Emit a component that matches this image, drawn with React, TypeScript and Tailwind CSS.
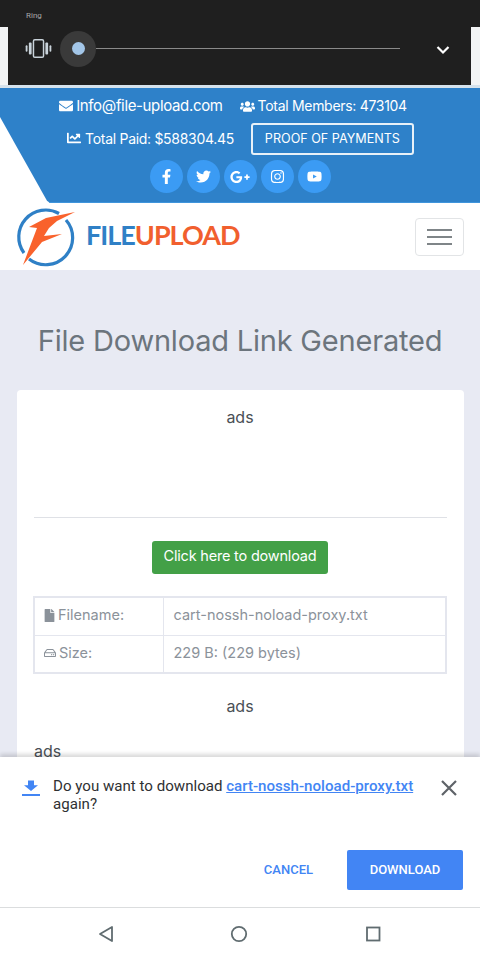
import React from "react";
import { FaEnvelope, FaUsers, FaChartLine, FaFacebookF, FaTwitter, FaGooglePlusG, FaInstagram, FaYoutube, FaFile, FaRegHdd } from "react-icons/fa";

const socials = [FaFacebookF, FaTwitter, FaGooglePlusG, FaInstagram, FaYoutube];

function Logo() {
  return (
    <svg width="60" height="60" viewBox="0 0 60 60" fill="none">
      <path d="M9 46 A27 27 0 0 1 44 6.5" stroke="#2f80c6" strokeWidth="3.2" fill="none" />
      <path d="M51 13 A27 27 0 0 1 14 52" stroke="#2f80c6" strokeWidth="3.2" fill="none" />
      <path d="M60 5 L31 11 L14 20 L22 21 L8 58 L27 35 L47 27 L29 29 L34 21 L42 14 Z" fill="#f9622c" />
    </svg>
  );
}

export default function App() {
  return (
    <div className="w-[480px] h-[960px] overflow-hidden flex flex-col bg-white font-['Inter',sans-serif]">
      {/* Android ring volume panel */}
      <div className="h-[88px] shrink-0 flex flex-col bg-[#f2f4f5]">
        <div className="h-[27px] bg-[#1f1f1f] pl-[26px] pt-[11px] text-[8px] leading-[10px] text-[#a8a8a8] font-['Roboto',sans-serif]">Ring</div>
        <div className="mx-2 w-[463px] h-[58px] bg-[#1f1f1f] flex items-center">
          <svg className="ml-[17px] mb-[15px]" width="27" height="22" viewBox="0 0 29 24" fill="none">
            <rect x="9" y="2" width="11" height="19" rx="1.5" stroke="#c9d3da" strokeWidth="1.6" />
            <rect x="4" y="5" width="3" height="13" rx="1" fill="#c9d3da" />
            <rect x="22" y="5" width="3" height="13" rx="1" fill="#c9d3da" />
            <rect x="0.5" y="8" width="2" height="7" rx="1" fill="#c9d3da" />
            <rect x="26.5" y="8" width="2" height="7" rx="1" fill="#c9d3da" />
          </svg>
          <div className="ml-[8px] w-[36px] h-[36px] rounded-full bg-[#3a3a3a] flex items-center justify-center mb-[15px]">
            <div className="w-[13px] h-[13px] rounded-full bg-[#a3c6e8]"></div>
          </div>
          <div className="w-[304px] h-px bg-[#8a8a8a] mb-[15px]"></div>
          <svg className="ml-[36px] mb-[13px]" width="14" height="10" viewBox="0 0 14 10" fill="none">
            <path d="M1.5 2 L7 7.5 L12.5 2" stroke="#ffffff" strokeWidth="2.2" />
          </svg>
        </div>
        <div className="flex-1 bg-[#d5e2ec]"></div>
      </div>

      {/* Blue top bar */}
      <div className="h-[115px] shrink-0 bg-[#2e81c9] border-b border-[#3f95dc] [clip-path:polygon(0_0,100%_0,100%_100%,50px_100%,47px_98%,0_29px)] text-white flex flex-col items-center pt-[7px]">
        <div className="h-[22px] flex items-center mr-[14px]">
          <FaEnvelope className="w-[14px] h-[14px] mr-[3px]" />
          <span className="text-[15px] tracking-[-0.35px]">Info@file-upload.com</span>
          <FaUsers className="w-[15px] h-[15px] ml-[17px] mr-[3px]" />
          <span className="text-[14px] tracking-[-0.3px] mb-[1px]">Total Members: 473104</span>
        </div>
        <div className="h-[32px] mt-[6px] flex items-center">
          <FaChartLine className="w-[16px] h-[14px] mr-[3px] mb-[2px]" />
          <span className="text-[14px] tracking-[-0.3px] mb-[2px]">Total Paid: $588304.45</span>
          <div className="ml-[17px] w-[163px] h-[32px] border-2 border-[#e8f1f8] rounded-[3px] flex items-center justify-center text-[12.6px]">PROOF OF PAYMENTS</div>
        </div>
        <div className="flex gap-[4px] mt-[5px]">
          {socials.map((I, i) => (
            <div key={i} className="w-[33px] h-[33px] rounded-full bg-[#3b9bf4] flex items-center justify-center">
              <I className={i === 2 ? "w-[20px] h-[20px]" : "w-[15px] h-[15px]"} />
            </div>
          ))}
        </div>
      </div>

      {/* Nav */}
      <div className="h-[67px] shrink-0 bg-white flex items-center justify-between pl-[15px] pr-[16px]">
        <div className="flex items-center">
          <Logo />
          <span className="ml-[11px] mt-[-3px] text-[27px] tracking-[-1px] font-['Lato',sans-serif] font-bold text-[#2f80c6]">FILE<span className="text-[#f15f2e]">UPLOAD</span></span>
        </div>
        <div className="w-[49px] h-[38px] border border-[#e2e4e6] rounded-[4px] flex flex-col items-center justify-center gap-[5px]">
          <div className="w-[25px] h-[2px] bg-[#7f8588]"></div>
          <div className="w-[25px] h-[2px] bg-[#7f8588]"></div>
          <div className="w-[25px] h-[2px] bg-[#7f8588]"></div>
        </div>
      </div>

      {/* Content */}
      <div className="flex-1 min-h-0 bg-[#e8eaf3] px-[17px] overflow-hidden flex flex-col">
        <h1 className="mt-[52px] shrink-0 text-center text-[29px] leading-[38px] text-[#6c757d] font-normal tracking-[-0.2px]">File Download Link Generated</h1>
        <div className="mt-[30px] w-[447px] flex-1 bg-white rounded-t-[4px] pl-[16px] pr-[17px] text-[#4a4f55] text-[16px] flex flex-col overflow-hidden">
          <div className="shrink-0 text-center mt-[17px] leading-[20px]">ads</div>
          <div className="shrink-0 mt-[90px] ml-[1px] h-px bg-[#dfe1e6]"></div>
          <div className="shrink-0 mt-[23px] self-center w-[176px] h-[33px] pb-[4px] bg-[#43a047] rounded-[3px] text-white text-[14.5px] flex items-center justify-center tracking-[-0.2px]">Click here to download</div>
          <table className="shrink-0 mt-[22px] w-[414px] border-collapse text-[14.5px] text-[#8b929a] table-fixed border-2 border-[#e4e6ee]">
            <tbody>
              <tr className="h-[38px]">
                <td className="w-[129px] border border-[#e4e6ee] pl-[9px] pb-[2px]">
                  <span className="flex items-center"><FaFile className="w-[11px] h-[13px] mr-[3px] text-[#8b929a]" />Filename:</span>
                </td>
                <td className="border border-[#e4e6ee] pl-[10px] pb-[2px]">cart-nossh-noload-proxy.txt</td>
              </tr>
              <tr className="h-[38px]">
                <td className="border border-[#e4e6ee] pl-[9px] pb-[2px]">
                  <span className="flex items-center"><FaRegHdd className="w-[12px] h-[12px] mr-[3px] text-[#8b929a]" />Size:</span>
                </td>
                <td className="border border-[#e4e6ee] pl-[10px] pb-[2px]">229 B: (229 bytes)</td>
              </tr>
            </tbody>
          </table>
          <div className="shrink-0 text-center mt-[22px] leading-[20px]">ads</div>
          <div className="shrink-0 mt-[25px] ml-[1px] leading-[20px]">ads</div>
        </div>
      </div>

      {/* Chrome download prompt */}
      <div className="h-[150px] shrink-0 bg-white font-['Roboto',sans-serif] shadow-[0_-3px_4px_rgba(0,0,0,0.15)] flex flex-col relative">
        <div className="flex pt-[20px] pl-[22px]">
          <svg className="mt-[3px] shrink-0" width="18" height="17" viewBox="0 0 18 17" fill="none">
            <path d="M6 1 H12 V6 H16 L9 12 L2 6 H6 Z" fill="#4285f4" transform="translate(0 -0.5) scale(1 0.95)" />
            <rect x="0" y="14" width="18" height="2" fill="#4285f4" />
          </svg>
          <div className="ml-[13px] w-[375px] text-[15.1px] leading-[18px] text-[#2f3133]">
            Do you want to download <span className="text-[#4285f4] underline font-medium">cart-nossh-noload-proxy.txt</span> again?
          </div>
          <svg className="mt-[2px] ml-[12px] shrink-0" width="18" height="18" viewBox="0 0 18 18" fill="none">
            <path d="M2 2 L16 16 M16 2 L2 16" stroke="#5f6368" strokeWidth="2.2" />
          </svg>
        </div>
        <div className="mt-[37px] flex items-center justify-end pr-[17px]">
          <span className="text-[13px] font-medium text-[#4285f4] mr-[34px]">CANCEL</span>
          <div className="w-[116px] h-[40px] rounded-[2px] bg-[#4285f4] text-white text-[13px] font-medium flex items-center justify-center">DOWNLOAD</div>
        </div>
      </div>

      {/* Android nav */}
      <div className="h-[53px] shrink-0 bg-white border-t border-[#dcdedf] flex items-center justify-center">
        <svg width="290" height="20" viewBox="0 0 290 20" fill="none" className="mt-[-1px]">
          <path d="M17 3 L17 17 L5 10 Z" stroke="#606c70" strokeWidth="1.8" strokeLinejoin="round" />
          <circle cx="144" cy="10" r="7.2" stroke="#606c70" strokeWidth="1.8" />
          <rect x="272" y="3.5" width="12.5" height="13" stroke="#606c70" strokeWidth="1.8" />
        </svg>
      </div>
    </div>
  );
}
